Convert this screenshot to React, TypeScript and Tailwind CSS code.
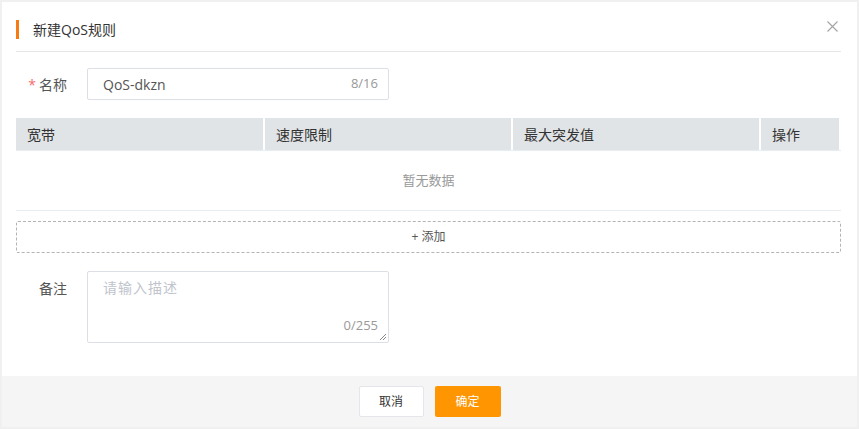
import React from "react";

const font = "font-['Open_Sans','Noto_Sans_CJK_SC',sans-serif]";

function CloseIcon() {
  return (
    <svg width="11" height="11" viewBox="0 0 11 11" fill="none">
      <path d="M0.5 0.5 L10.5 10.5 M10.5 0.5 L0.5 10.5" stroke="#a3a3a3" strokeWidth="1.1" />
    </svg>
  );
}

const columns = ["宽带", "速度限制", "最大突发值", "操作"];

export default function App() {
  return (
    <div className={`h-[429px] w-[859px] bg-[#f0f0f0] p-[2px] ${font}`}>
      <div className="relative flex h-full flex-col bg-white">
        <button className="absolute right-[19px] top-[19px]">
          <CloseIcon />
        </button>

        <div className="pl-[14px] pr-[16px]">
          <header className="flex items-center border-b border-[#e6e6e6] pb-[12px] pt-[18px]">
            <span className="h-[19px] w-[3px] bg-[#f57c14]" />
            <h2 className="ml-[14px] text-[14px] leading-[19px] text-[#333]">新建QoS规则</h2>
          </header>

          <div className="mt-[16px] flex items-center">
            <label className="w-[71px] pr-[20px] text-right text-[14px] text-[#555]">
              <span className="mr-[3px] text-[#f56c6c]">*</span>名称
            </label>
            <div className="flex h-[32px] w-[302px] items-center justify-between rounded-[2px] border border-[#dcdfe6] pl-[15px] pr-[10px]">
              <span className="text-[14px] text-[#555]">QoS-dkzn</span>
              <span className="text-[13px] text-[#999]">8/16</span>
            </div>
          </div>

          <div className="mt-[18px] w-[825px]">
            <div className="grid grid-cols-[247px_246px_246px_78px] gap-x-[2px] border-b border-[#e8edf2]">
              {columns.map((c) => (
                <div key={c} className="flex h-[32px] items-center bg-[#e1e4e6] pl-[11px] text-[14px] text-[#333]">
                  {c}
                </div>
              ))}
            </div>
            <div className="flex h-[60px] items-center justify-center border-b border-[#e8edf2] text-[13px] text-[#999]">
              暂无数据
            </div>
          </div>

          <button className="mt-[10px] flex h-[32px] w-[825px] items-center justify-center rounded-[2px] border border-dashed border-[#b4b4b4] text-[12px] text-[#555]">
            + 添加
          </button>

          <div className="mt-[18px] flex items-start">
            <label className="w-[71px] pr-[20px] pt-[7px] text-right text-[14px] text-[#555]">备注</label>
            <div className="relative h-[72px] w-[302px] rounded-[2px] border border-[#dcdfe6]">
              <span className="absolute left-[15px] top-[5px] text-[14px] tracking-[1px] text-[#c0c4cc]">请输入描述</span>
              <span className="absolute bottom-[7px] right-[10px] text-[13px] text-[#999]">0/255</span>
              <svg className="absolute bottom-[1px] right-[1px]" width="8" height="8" viewBox="0 0 8 8">
                <path d="M7 1 L1 7 M7 4 L4 7" stroke="#888" strokeWidth="1" />
              </svg>
            </div>
          </div>
        </div>

        <footer className="mt-auto flex h-[51px] items-start justify-center gap-[11px] bg-[#f5f5f5] pt-[10px]">
          <button className="h-[31px] w-[65px] rounded-[2px] border border-[#e4e6eb] bg-white text-[12px] text-[#333]">
            取消
          </button>
          <button className="h-[31px] w-[66px] rounded-[2px] bg-[#ff9500] text-[12px] text-white">确定</button>
        </footer>
      </div>
    </div>
  );
}
